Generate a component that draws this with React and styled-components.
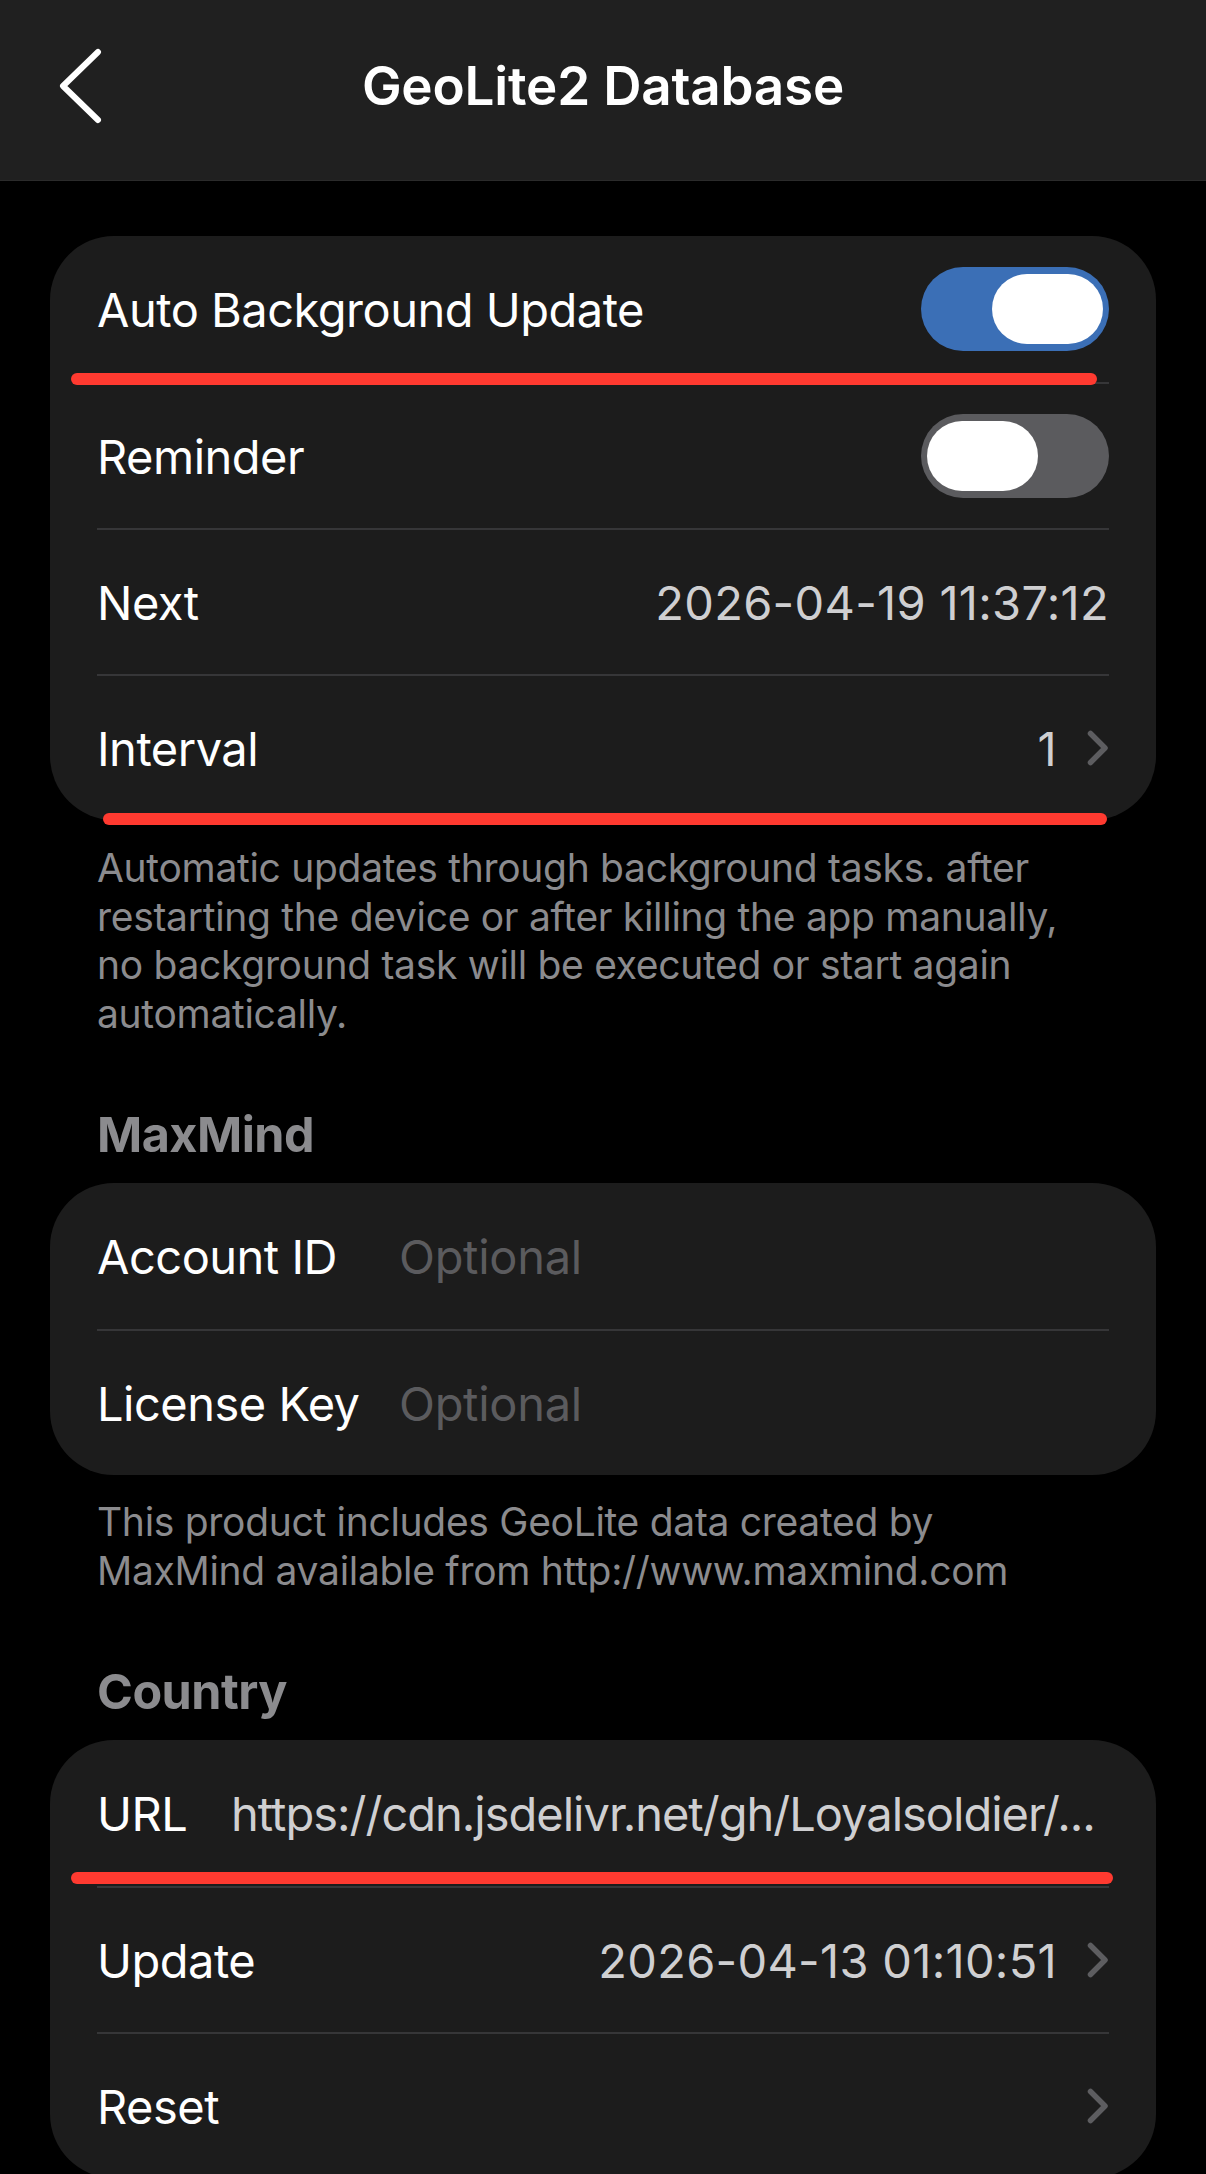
import React from "react";
import styled, { createGlobalStyle } from "styled-components";

const GlobalStyle = createGlobalStyle`
  html, body {
    margin: 0;
    padding: 0;
    background: #000;
  }
  body {
    font-family: Inter, "Noto Sans", "Liberation Sans", sans-serif;
    -webkit-font-smoothing: antialiased;
  }
  * {
    box-sizing: border-box;
  }
`;

function BackChevron() {
  return (
    <svg width="48" height="76" viewBox="0 0 48 76" fill="none">
      <path
        d="M40 4 L5 38 L40 72"
        stroke="#fff"
        strokeWidth="6"
        strokeLinecap="round"
        strokeLinejoin="round"
      />
    </svg>
  );
}

function Chevron() {
  return (
    <svg width="22" height="36" viewBox="0 0 22 36" fill="none">
      <path
        d="M3.5 3.5 L18 18 L3.5 32.5"
        stroke="#5d5d60"
        strokeWidth="5.5"
        strokeLinecap="round"
        strokeLinejoin="round"
      />
    </svg>
  );
}

function Toggle({ on }) {
  return (
    <Track on={on ? 1 : 0}>
      <Knob />
    </Track>
  );
}

export default function App() {
  return (
    <>
      <GlobalStyle />
      <Page>
        <NavBar>
          <BackButton>
            <BackChevron />
          </BackButton>
          <Title>GeoLite2 Database</Title>
          <span />
        </NavBar>

        <Content>
          <Card>
            <Row>
              <Label>Auto Background Update</Label>
              <Toggle on />
            </Row>
            <Row>
              <Label>Reminder</Label>
              <Toggle />
            </Row>
            <Row>
              <Label>Next</Label>
              <Value>2026-04-19 11:37:12</Value>
            </Row>
            <Row>
              <Label>Interval</Label>
              <Trail>
                <Value>1</Value>
                <Chevron />
              </Trail>
            </Row>
            <RedMark left={21} top={137} width={1026} />
            <RedMark left={53} top={577} width={1004} />
          </Card>
          <Footnote gap={24}>
            Automatic updates through background tasks. after
            <br />
            restarting the device or after killing the app manually,
            <br />
            no background task will be executed or start again
            <br />
            automatically.
          </Footnote>

          <SectionTitle>MaxMind</SectionTitle>
          <Card>
            <Row>
              <Label width={302}>Account ID</Label>
              <Placeholder>Optional</Placeholder>
            </Row>
            <Row>
              <Label width={302}>License Key</Label>
              <Placeholder>Optional</Placeholder>
            </Row>
          </Card>
          <Footnote gap={23}>
            This product includes GeoLite data created by
            <br />
            MaxMind available from http://www.maxmind.com
          </Footnote>

          <SectionTitle>Country</SectionTitle>
          <Card>
            <Row>
              <Label width={134}>URL</Label>
              <UrlValue>https://cdn.jsdelivr.net/gh/Loyalsoldier/...</UrlValue>
            </Row>
            <Row>
              <Label>Update</Label>
              <Trail>
                <Value>2026-04-13 01:10:51</Value>
                <Chevron />
              </Trail>
            </Row>
            <Row>
              <Label>Reset</Label>
              <Trail>
                <Chevron />
              </Trail>
            </Row>
            <RedMark left={21} top={132} width={1042} />
          </Card>
        </Content>
      </Page>
    </>
  );
}

//styles

const Page = styled.div`
  width: 1206px;
  height: 2174px;
  overflow: hidden;
  background: #000;
  color: #fff;
`;

const NavBar = styled.header`
  height: 181px;
  background: #202020;
  border-bottom: 1px solid #2b2b2b;
  display: grid;
  grid-template-columns: 1fr auto 1fr;
  align-items: start;
  padding-top: 48px;
`;

const BackButton = styled.div`
  padding-left: 58px;
  display: flex;
`;

const Title = styled.h1`
  margin: 0;
  font-size: 53px;
  line-height: 76px;
  font-weight: 600;
  letter-spacing: -0.2px;
  color: #fff;
`;

const Content = styled.main`
  padding: 55px 50px 0;
  display: flex;
  flex-direction: column;
`;

const Card = styled.section`
  position: relative;
  background: #1c1c1c;
  border-radius: 64px;
  display: flex;
  flex-direction: column;
`;

const Row = styled.div`
  height: 146px;
  margin: 0 47px;
  display: flex;
  align-items: center;
  justify-content: space-between;

  & + & {
    border-top: 2px solid #363638;
  }
`;

const Label = styled.span`
  font-size: 47px;
  letter-spacing: -0.5px;
  color: #fff;
  white-space: nowrap;
  flex: ${({ width }) => (width ? `0 0 ${width}px` : "0 0 auto")};
`;

const Value = styled.span`
  font-size: 47px;
  letter-spacing: 0.3px;
  color: #cfcfd1;
  white-space: nowrap;
`;

const Placeholder = styled.span`
  flex: 1;
  font-size: 47px;
  letter-spacing: -0.3px;
  color: #5b5b5e;
`;

const UrlValue = styled.span`
  flex: 1;
  min-width: 0;
  font-size: 47px;
  letter-spacing: -1px;
  color: #cfcfd1;
  white-space: nowrap;
  overflow: hidden;
  text-overflow: ellipsis;
`;

const Trail = styled.div`
  display: flex;
  align-items: center;
  gap: 30px;
`;

const Track = styled.div`
  width: 188px;
  height: 84px;
  border-radius: 42px;
  padding: 0 6px;
  display: flex;
  align-items: center;
  justify-content: ${({ on }) => (on ? "flex-end" : "flex-start")};
  background: ${({ on }) => (on ? "#3b6fb6" : "#5b5b5e")};
`;

const Knob = styled.div`
  width: 111px;
  height: 70px;
  border-radius: 35px;
  background: #fff;
`;

const Footnote = styled.p`
  margin: ${({ gap }) => gap}px 47px 0;
  font-size: 39px;
  line-height: 48.5px;
  letter-spacing: -0.3px;
  color: #8b8b8e;
`;

const SectionTitle = styled.h2`
  margin: 67px 47px 18px;
  font-size: 48.5px;
  line-height: 60px;
  font-weight: 700;
  letter-spacing: -0.5px;
  color: #8b8b8e;
`;

const RedMark = styled.div`
  position: absolute;
  left: ${({ left }) => left}px;
  top: ${({ top }) => top}px;
  width: ${({ width }) => width}px;
  height: 12px;
  border-radius: 6px;
  background: #ff3a30;
`;
